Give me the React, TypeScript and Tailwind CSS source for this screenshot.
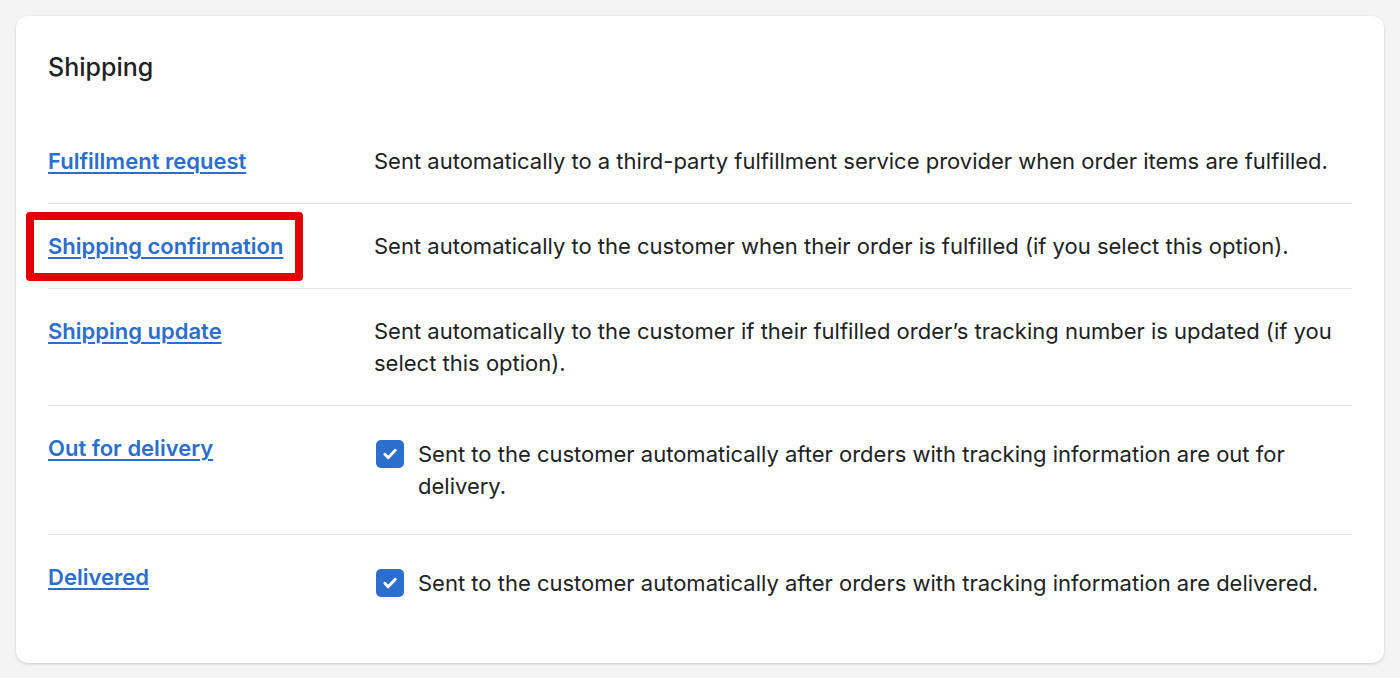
import React from "react";

// ── Data ─────────────────────────────────────────────────────────────

type Row = {
  title: string;
  text: string;
  checkbox?: boolean;
  highlight?: boolean;
};

const rows: Row[] = [
  {
    title: "Fulfillment request",
    text: "Sent automatically to a third-party fulfillment service provider when order items are fulfilled.",
  },
  {
    title: "Shipping confirmation",
    text: "Sent automatically to the customer when their order is fulfilled (if you select this option).",
    highlight: true,
  },
  {
    title: "Shipping update",
    text: "Sent automatically to the customer if their fulfilled order\u2019s tracking number is updated (if you select this option).",
  },
  {
    title: "Out for delivery",
    text: "Sent to the customer automatically after orders with tracking information are out for delivery.",
    checkbox: true,
  },
  {
    title: "Delivered",
    text: "Sent to the customer automatically after orders with tracking information are delivered.",
    checkbox: true,
  },
];

// ── Pieces ───────────────────────────────────────────────────────────

function CheckedBox() {
  return (
    <span className="ml-[2px] mt-[2px] flex h-[28px] w-[28px] shrink-0 items-center justify-center rounded-[5px] bg-[#2c6ecb]">
      <svg width="18" height="18" viewBox="0 0 16 16" fill="none" aria-hidden="true">
        <path
          d="M3.4 8.3l3 3 6.3-6.6"
          stroke="white"
          strokeWidth="2.5"
          strokeLinecap="round"
          strokeLinejoin="round"
        />
      </svg>
    </span>
  );
}

function NotificationRow({ row, first }: { row: Row; first: boolean }) {
  return (
    <div className={`flex py-[26px] ${first ? "" : "border-t border-[#e1e3e5]"}`}>
      <div className="relative w-[326px] shrink-0">
        <a
          href="#"
          className="font-semibold text-[#2c6ecb] underline decoration-[2px] underline-offset-[3px]"
        >
          {row.title}
        </a>
        {row.highlight && (
          <div className="pointer-events-none absolute left-[-22px] top-[-18px] h-[69px] w-[277px] rounded-[4px] border-[8px] border-[#e30000]" />
        )}
      </div>
      {row.checkbox ? (
        <div className="my-[6px] flex flex-1 items-start gap-[14px]">
          <CheckedBox />
          <p>{row.text}</p>
        </div>
      ) : (
        <p className="flex-1">{row.text}</p>
      )}
    </div>
  );
}

// ── Component ────────────────────────────────────────────────────────

export default function App() {
  return (
    <div className="min-h-[678px] bg-[#f4f4f4] p-[16px] font-['Inter','Noto_Sans',sans-serif] text-[22px] leading-[32px] text-[#202223]">
      <section className="rounded-[12px] bg-white px-[32px] pb-[32px] pt-[35px] shadow-[0_1px_3px_rgba(0,0,0,0.18)]">
        <h2 className="text-[25px] font-medium leading-[32px]">Shipping</h2>

        <div className="mt-[36px]">
          {rows.map((row, i) => (
            <NotificationRow key={row.title} row={row} first={i === 0} />
          ))}
        </div>
      </section>
    </div>
  );
}
